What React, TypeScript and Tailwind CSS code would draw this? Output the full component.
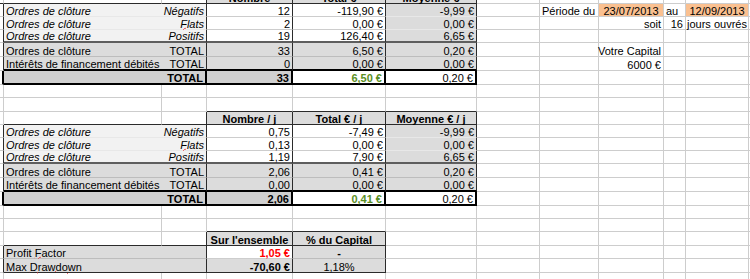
import type { ReactNode } from "react";

// column widths of the sheet (row header stub, A..J, overflow)
const COLS = [
  "w-[4px]",
  "w-[158px]",
  "w-[45px]",
  "w-[86px]",
  "w-[93px]",
  "w-[91px]",
  "w-[63px]",
  "w-[59px]",
  "w-[65px]",
  "w-[22px]",
  "w-[63px]",
  "w-[40px]",
];

const RIGHT = {
  g: "border-r border-r-[#cdcdcd]",
  n: "",
  d: "border-r border-r-[#2b2b2b]",
  k: "border-r-2 border-r-black",
};

const BOTTOM = {
  g: "border-b border-b-[#cdcdcd]",
  l: "border-b border-b-[#e8e8e8]",
  s: "border-b border-b-[#bdbdbd]",
  m: "border-b-2 border-b-[#5e5e5e]",
  d: "border-b border-b-[#2b2b2b]",
  k: "border-b-2 border-b-black",
};

const L = "justify-start pl-[2px]";
const R = "justify-end pr-[2px]";
const C = "justify-center";

const LIGHT = "bg-[#f2f2f2]";
const GRAY = "bg-[#dcdcdc]";
const DARK = "bg-[#d0d0d0]";
const ORANGE = "bg-[#fac090]";

type Cell = { t?: ReactNode; r?: keyof typeof RIGHT; b?: keyof typeof BOTTOM; cls?: string };
type Cells = Record<number, Cell>;

function Row({ h = 13, cells = {} }: { h?: 13 | 14; cells?: Cells }) {
  return (
    <div className={`flex ${h === 14 ? "h-[14px]" : "h-[13px]"}`}>
      {COLS.map((w, i) => {
        const c = cells[i] ?? {};
        return (
          <div
            key={i}
            className={`${w} shrink-0 flex items-end ${RIGHT[c.r ?? "g"]} ${BOTTOM[c.b ?? "g"]} ${c.cls ?? ""}`}
          >
            {c.t !== undefined && <span className="whitespace-nowrap leading-[9px]">{c.t}</span>}
          </div>
        );
      })}
    </div>
  );
}

// spell-check underline, as the sheet shows it
function Squiggle({ children }: { children: ReactNode }) {
  return (
    <span className="underline decoration-wavy decoration-[#e44] decoration-1 underline-offset-[-1px]">
      {children}
    </span>
  );
}

type Line = { label: ReactNode; kind: ReactNode; n: string; t: string; m: string };

function DetailRows({ lines, side = [] }: { lines: Line[]; side?: Cells[] }) {
  return (
    <>
      {lines.map((l, i) => {
        const last = i === lines.length - 1;
        const b = last ? "m" : "l";
        const bw = last ? "m" : "g";
        return (
          <Row
            key={i}
            cells={{
              0: { r: "d" },
              1: { t: l.label, r: "n", b, cls: `${LIGHT} ${L} italic` },
              2: { t: l.kind, r: "d", b, cls: `${LIGHT} ${R} italic` },
              3: { t: l.n, r: "d", b: bw, cls: `bg-white ${R}` },
              4: { t: l.t, r: "d", b: bw, cls: `bg-white ${R}` },
              5: { t: l.m, r: "d", b, cls: `${GRAY} ${R}` },
              ...side[i],
            }}
          />
        );
      })}
    </>
  );
}

type Tot = { n: string; t: string; m: string };

function TotalRows({ close, fees, all, side = [] }: { close: Tot; fees: Tot; all: Tot; side?: Cells[] }) {
  return (
    <>
      <Row
        h={14}
        cells={{
          0: { r: "d" },
          1: { t: "Ordres de clôture", r: "n", b: "s", cls: `${GRAY} ${L}` },
          2: { t: "TOTAL", r: "d", b: "s", cls: `${GRAY} ${R}` },
          3: { t: close.n, r: "d", b: "s", cls: `${GRAY} ${R}` },
          4: { t: close.t, r: "d", b: "s", cls: `${GRAY} ${R}` },
          5: { t: close.m, r: "d", b: "s", cls: `${GRAY} ${R}` },
          ...side[0],
        }}
      />
      <Row
        h={14}
        cells={{
          0: { r: "d" },
          1: { t: "Intérêts de financement débités", r: "n", b: "k", cls: `${GRAY} ${L}` },
          2: { t: "TOTAL", r: "d", b: "k", cls: `${GRAY} ${R}` },
          3: { t: fees.n, r: "d", b: "k", cls: `${GRAY} ${R}` },
          4: { t: fees.t, r: "d", b: "k", cls: `${GRAY} ${R}` },
          5: { t: fees.m, r: "d", b: "k", cls: `${GRAY} ${R}` },
          ...side[1],
        }}
      />
      <Row
        h={14}
        cells={{
          0: { r: "k" },
          1: { r: "n", b: "k", cls: DARK },
          2: { t: "TOTAL", r: "k", b: "k", cls: `${DARK} ${R} font-bold` },
          3: { t: all.n, r: "k", b: "k", cls: `${DARK} ${R} font-bold` },
          4: { t: all.t, r: "k", b: "k", cls: `bg-white ${R} font-bold text-[#5a8f23]` },
          5: { t: all.m, r: "k", b: "k", cls: `bg-white ${R}` },
        }}
      />
    </>
  );
}

const totals: Line[] = [
  { label: "Ordres de clôture", kind: "Négatifs", n: "12", t: "-119,90 €", m: "-9,99 €" },
  { label: "Ordres de clôture", kind: <Squiggle>Flats</Squiggle>, n: "2", t: "0,00 €", m: "0,00 €" },
  { label: "Ordres de clôture", kind: "Positifs", n: "19", t: "126,40 €", m: "6,65 €" },
];

const perDay: Line[] = [
  { label: "Ordres de clôture", kind: "Négatifs", n: "0,75", t: "-7,49 €", m: "-9,99 €" },
  { label: "Ordres de clôture", kind: <Squiggle>Flats</Squiggle>, n: "0,13", t: "0,00 €", m: "0,00 €" },
  { label: "Ordres de clôture", kind: "Positifs", n: "1,19", t: "7,90 €", m: "6,65 €" },
];

// period + capital block, columns G..J
const periodSide: Cells[] = [
  {
    7: { t: "Période du", cls: L },
    8: { t: "23/07/2013", cls: `${ORANGE} ${C}` },
    9: { t: "au", cls: L },
    10: { t: "12/09/2013", cls: `${ORANGE} ${C}` },
  },
  {
    8: { t: "soit", cls: R },
    9: { t: "16", cls: R },
    10: { t: "jours ouvrés", cls: "justify-start pl-[1px]" },
  },
];

const capitalSide: Cells[] = [
  { 8: { t: "Votre Capital", cls: `${R} pr-[1px]` } },
  { 8: { t: "6000 €", cls: R } },
];

const headTop = { r: "d", b: "d" } as const;

export default function App() {
  return (
    <div className="w-[750px] h-[279px] overflow-hidden bg-white text-[11px] text-black font-['Liberation_Sans',Arial,sans-serif]">
      <div className="-mt-[9px]">
        {/* header of the first table, mostly scrolled out */}
        <Row
          cells={{
            0: { b: "d" },
            1: { b: "d" },
            2: { ...headTop },
            3: { ...headTop, t: "Nombre", cls: `${GRAY} ${C} font-bold` },
            4: { ...headTop, t: "Total €", cls: `${GRAY} ${C} font-bold` },
            5: { ...headTop, t: "Moyenne €", cls: `${GRAY} ${C} font-bold` },
          }}
        />
        <DetailRows lines={totals} side={periodSide} />
        <TotalRows
          close={{ n: "33", t: "6,50 €", m: "0,20 €" }}
          fees={{ n: "0", t: "0,00 €", m: "0,00 €" }}
          all={{ n: "33", t: "6,50 €", m: "0,20 €" }}
          side={capitalSide}
        />

        <Row />
        <Row h={14} cells={{ 3: { b: "d" }, 4: { b: "d" }, 5: { b: "d" } }} />
        <Row
          cells={{
            1: { b: "d" },
            2: { ...headTop },
            3: { ...headTop, t: "Nombre / j", cls: `${GRAY} ${C} font-bold` },
            4: { ...headTop, t: "Total € / j", cls: `${GRAY} ${C} font-bold` },
            5: { ...headTop, t: "Moyenne € / j", cls: `${GRAY} ${C} font-bold` },
          }}
        />
        <DetailRows lines={perDay} />
        <TotalRows
          close={{ n: "2,06", t: "0,41 €", m: "0,20 €" }}
          fees={{ n: "0,00", t: "0,00 €", m: "0,00 €" }}
          all={{ n: "2,06", t: "0,41 €", m: "0,20 €" }}
        />

        <Row />
        <Row cells={{ 3: { b: "d" }, 4: { b: "d" } }} />
        <Row
          h={14}
          cells={{
            1: { b: "d" },
            2: { ...headTop },
            3: { ...headTop, t: "Sur l'ensemble", cls: `${GRAY} ${C} font-bold` },
            4: { ...headTop, t: "% du Capital", cls: `${GRAY} ${C} font-bold` },
          }}
        />
        <Row
          cells={{
            0: { r: "d" },
            1: { t: <>Profit <Squiggle>Factor</Squiggle></>, r: "n", b: "s", cls: `${GRAY} ${L}` },
            2: { r: "d", b: "s", cls: GRAY },
            3: { t: "1,05 €", r: "d", cls: `bg-white ${R} font-bold text-[#ff0000]` },
            4: { t: "-", r: "d", b: "s", cls: `${GRAY} ${C} font-bold` },
          }}
        />
        <Row
          h={14}
          cells={{
            0: { r: "d" },
            1: { t: <>Max <Squiggle>Drawdown</Squiggle></>, r: "n", b: "d", cls: `${GRAY} ${L}` },
            2: { r: "d", b: "d", cls: GRAY },
            3: { t: "-70,60 €", r: "d", b: "d", cls: `${GRAY} ${R} font-bold` },
            4: { t: "1,18%", r: "d", b: "d", cls: `${GRAY} ${C}` },
          }}
        />
        <Row h={14} />
      </div>
    </div>
  );
}
